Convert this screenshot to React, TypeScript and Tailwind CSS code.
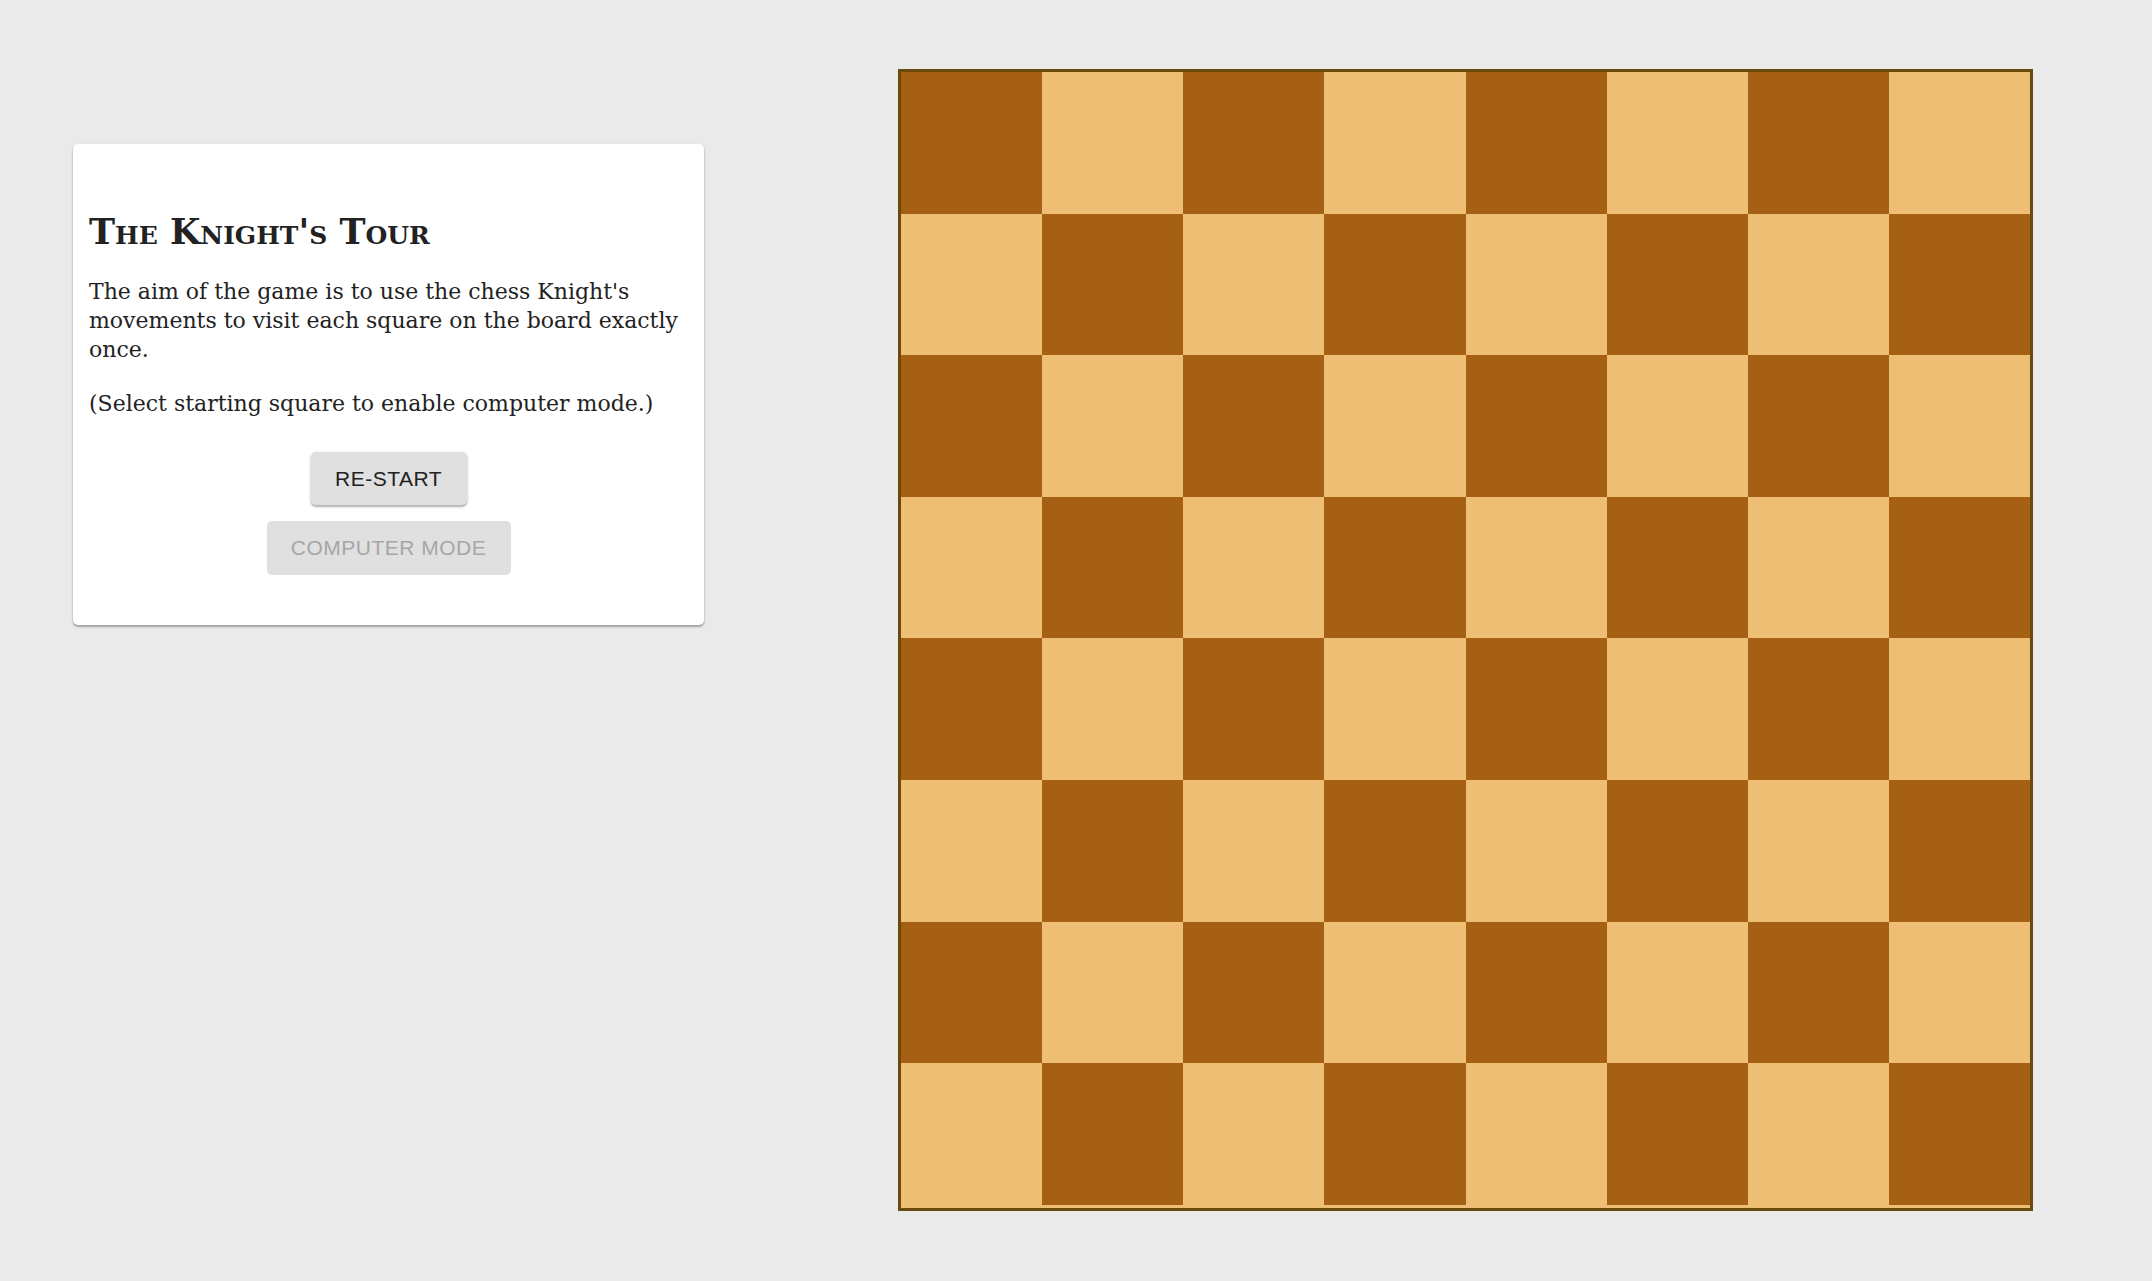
import React from "react";

export default function App() {
  const squares = [];
  for (let r = 0; r < 8; r++) {
    for (let c = 0; c < 8; c++) {
      const dark = (r + c) % 2 === 0;
      squares.push(
        <div
          key={`${r}-${c}`}
          className={dark ? "bg-[#a66014]" : "bg-[#edbe74]"}
        />
      );
    }
  }
  const serif = { fontFamily: '"DejaVu Serif", Georgia, serif' };
  return (
    <div className="min-h-screen w-full bg-[#eaeaea] flex items-start pl-[73px] pt-[69px]">
      <div className="mt-[75px] w-[631px] h-[481px] shrink-0 bg-white rounded-[5px] shadow-[0_2px_2px_rgba(0,0,0,0.25),0_1px_3px_rgba(0,0,0,0.12)] px-[16px] pt-[68px] flex flex-col">
        <h1
          className="text-[35px] leading-[40px] font-bold text-[#222] [font-variant:small-caps] whitespace-nowrap"
          style={serif}
        >
          The Knight's Tour
        </h1>
        <p className="mt-[25px] text-[22px] leading-[29px] text-[#222] whitespace-nowrap" style={serif}>
          The aim of the game is to use the chess Knight's
          <br />
          movements to visit each square on the board exactly
          <br />
          once.
        </p>
        <p className="mt-[25px] text-[22px] leading-[29px] text-[#222] whitespace-nowrap" style={serif}>
          (Select starting square to enable computer mode.)
        </p>
        <div
          className="mt-[34px] flex flex-col items-center gap-[16px]"
          style={{ fontFamily: '"Liberation Sans", Arial, sans-serif' }}
        >
          <button className="h-[53px] w-[156px] rounded-[5px] bg-[#e0e0e0] text-[#222] text-[21px] tracking-[0.5px] shadow-[0_2px_2px_rgba(0,0,0,0.25),0_1px_4px_rgba(0,0,0,0.12)]">
            RE-START
          </button>
          <button
            disabled
            className="h-[54px] w-[244px] rounded-[5px] bg-[#e0e0e0] text-[#a6a6a6] text-[21px] tracking-[0.5px]"
          >
            COMPUTER MODE
          </button>
        </div>
      </div>
      <div className="ml-[194px] shrink-0 border-[3px] border-[#6b4a10] bg-[#edbe74] w-[1135px] h-[1142px]">
        <div className="grid grid-cols-8 grid-rows-[repeat(8,141.6px)] w-full">
          {squares}
        </div>
      </div>
    </div>
  );
}
